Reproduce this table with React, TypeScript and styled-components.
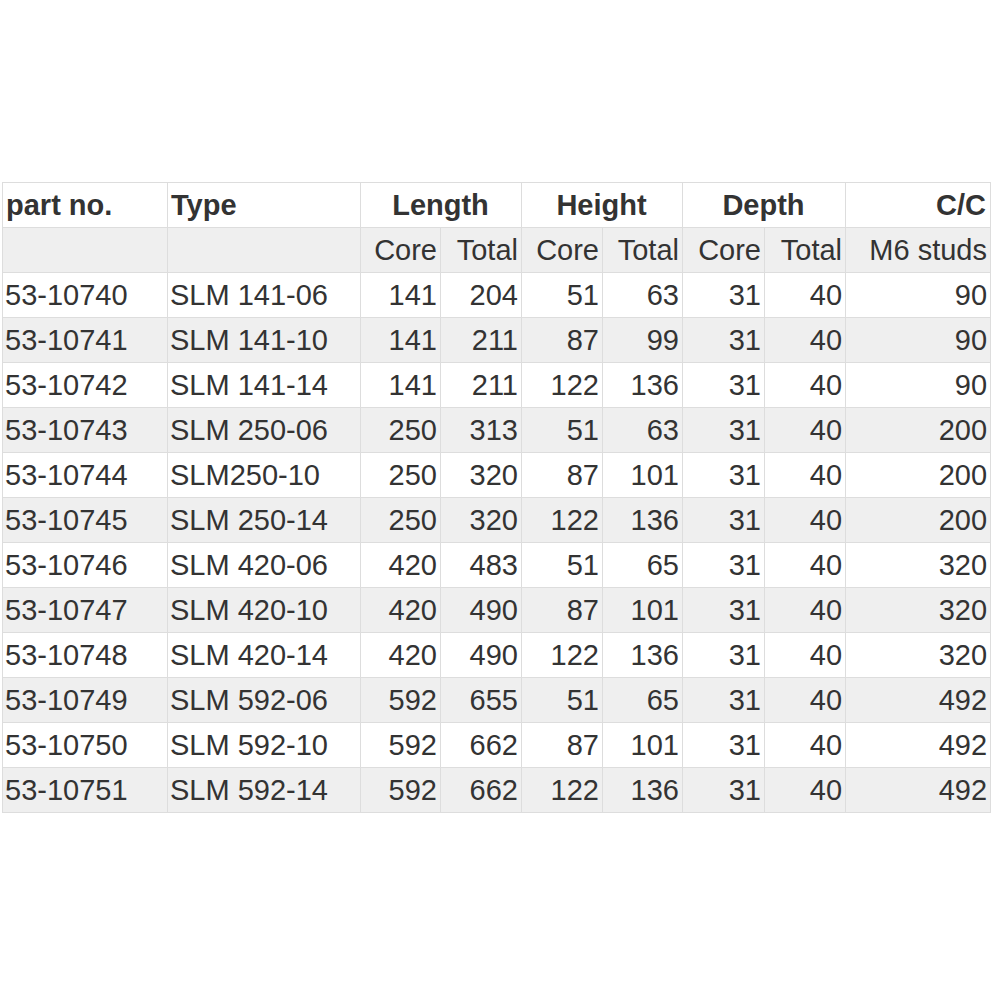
import { createGlobalStyle, styled } from "styled-components";

const GlobalStyle = createGlobalStyle`
  html, body {
    margin: 0;
    padding: 0;
    background: #ffffff;
  }
`;

const Page = styled.div`
  width: 1000px;
  height: 1000px;
  padding: 182px 0 0 2px;
  box-sizing: border-box;
  font-family: "Liberation Sans", Arial, sans-serif;
  color: #333333;
`;

const Table = styled.table`
  width: 988px;
  table-layout: fixed;
  border-collapse: collapse;
  font-size: 29px;
`;

const Row = styled.tr<{ $shade?: boolean }>`
  height: 45px;
  background: ${p => (p.$shade ? "#efefef" : "#ffffff")};
`;

const Head = styled.th<{ $align?: string }>`
  border: 1px solid #dddddd;
  padding: 0 4px 0 3px;
  font-weight: bold;
  text-align: ${p => p.$align || "center"};
  white-space: nowrap;
  overflow: hidden;
`;

const Cell = styled.td<{ $align?: string }>`
  border: 1px solid #dddddd;
  padding: 0 3px 0 2px;
  font-weight: normal;
  text-align: ${p => p.$align || "right"};
  white-space: nowrap;
  overflow: hidden;
`;

const widths = [165, 193, 80, 81, 81, 80, 82, 81, 145];

const rows = [
  ["53-10740", "SLM 141-06", 141, 204, 51, 63, 31, 40, 90],
  ["53-10741", "SLM 141-10", 141, 211, 87, 99, 31, 40, 90],
  ["53-10742", "SLM 141-14", 141, 211, 122, 136, 31, 40, 90],
  ["53-10743", "SLM 250-06", 250, 313, 51, 63, 31, 40, 200],
  ["53-10744", "SLM250-10", 250, 320, 87, 101, 31, 40, 200],
  ["53-10745", "SLM 250-14", 250, 320, 122, 136, 31, 40, 200],
  ["53-10746", "SLM 420-06", 420, 483, 51, 65, 31, 40, 320],
  ["53-10747", "SLM 420-10", 420, 490, 87, 101, 31, 40, 320],
  ["53-10748", "SLM 420-14", 420, 490, 122, 136, 31, 40, 320],
  ["53-10749", "SLM 592-06", 592, 655, 51, 65, 31, 40, 492],
  ["53-10750", "SLM 592-10", 592, 662, 87, 101, 31, 40, 492],
  ["53-10751", "SLM 592-14", 592, 662, 122, 136, 31, 40, 492],
];

export default function App() {
  return (
    <>
      <GlobalStyle />
      <Page>
        <Table>
          <colgroup>
            {widths.map((w, i) => (
              <col key={i} style={{ width: w }} />
            ))}
          </colgroup>
          <thead>
            <Row>
              <Head $align="left">part no.</Head>
              <Head $align="left">Type</Head>
              <Head colSpan={2}>Length</Head>
              <Head colSpan={2}>Height</Head>
              <Head colSpan={2}>Depth</Head>
              <Head $align="right">C/C</Head>
            </Row>
            <Row $shade>
              <Cell />
              <Cell />
              <Cell>Core</Cell>
              <Cell>Total</Cell>
              <Cell>Core</Cell>
              <Cell>Total</Cell>
              <Cell>Core</Cell>
              <Cell>Total</Cell>
              <Cell>M6 studs</Cell>
            </Row>
          </thead>
          <tbody>
            {rows.map((r, i) => (
              <Row key={r[0]} $shade={i % 2 === 1}>
                {r.map((v, j) => (
                  <Cell key={j} $align={j < 2 ? "left" : "right"}>
                    {v}
                  </Cell>
                ))}
              </Row>
            ))}
          </tbody>
        </Table>
      </Page>
    </>
  );
}
